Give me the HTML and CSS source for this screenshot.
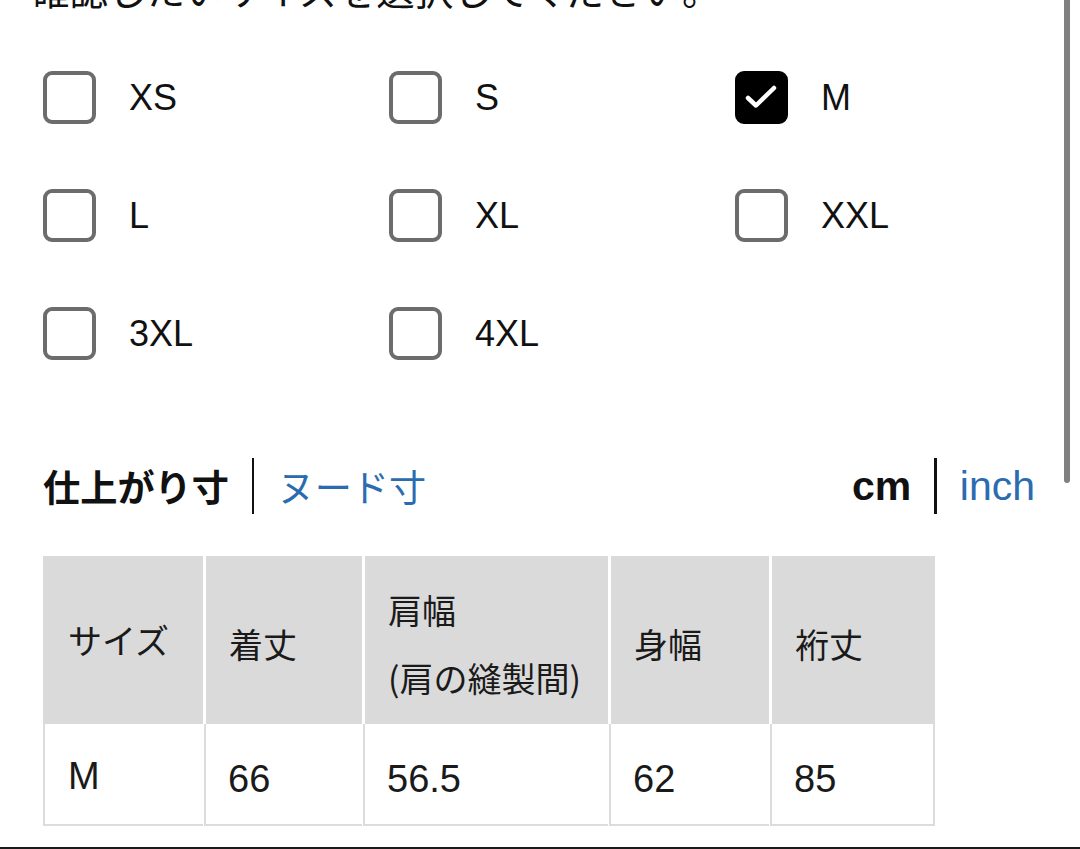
FILE: index.html
```html
<!DOCTYPE html>
<html lang="ja">
<head>
<meta charset="utf-8">
<link rel="stylesheet" href="styles.css">
</head>
<body>
<div class="page">
  <p class="title">確認したいサイズを選択してください。</p>

  <div class="options">
    <label class="opt"><span class="box"></span><span class="lbl">XS</span></label>
    <label class="opt"><span class="box"></span><span class="lbl">S</span></label>
    <label class="opt"><span class="box checked"><svg viewBox="0 0 53 53" width="53" height="53"><path d="M13 27 L21 34.5 L39 17" fill="none" stroke="#fff" stroke-width="4.5" stroke-linecap="round" stroke-linejoin="round"/></svg></span><span class="lbl">M</span></label>
    <label class="opt"><span class="box"></span><span class="lbl">L</span></label>
    <label class="opt"><span class="box"></span><span class="lbl">XL</span></label>
    <label class="opt"><span class="box"></span><span class="lbl">XXL</span></label>
    <label class="opt"><span class="box"></span><span class="lbl">3XL</span></label>
    <label class="opt"><span class="box"></span><span class="lbl">4XL</span></label>
  </div>

  <div class="tabs">
    <div class="tabgroup">
      <span class="tab active jp">仕上がり寸</span>
      <span class="sep"></span>
      <span class="tab link jp">ヌード寸</span>
    </div>
    <div class="tabgroup">
      <span class="tab active unit">cm</span>
      <span class="sep"></span>
      <span class="tab link unit">inch</span>
    </div>
  </div>

  <div class="table">
    <div class="th th-kana">サイズ</div>
    <div class="th">着丈</div>
    <div class="th">肩幅<br>(肩の縫製間)</div>
    <div class="th">身幅</div>
    <div class="th">裄丈</div>
    <div class="td">M</div>
    <div class="td">66</div>
    <div class="td">56.5</div>
    <div class="td">62</div>
    <div class="td">85</div>
  </div>
</div>
<div class="bottombar"></div>
<div class="scrollbar"></div>
</body>
</html>
```

FILE: styles.css
```css
html, body {
  margin: 0;
  padding: 0;
  background: #fff;
  overflow: hidden;
}
body {
  font-family: "Liberation Sans", "Noto Sans CJK JP", sans-serif;
  color: #111;
  height: 849px;
  position: relative;
}
.page {
  padding-left: 43px;
  padding-right: 45px;
}
.title {
  margin: -32px 0 0 -12px;
  font-family: "Noto Sans CJK JP", sans-serif;
  font-size: 38.5px;
  line-height: 40px;
  height: 40px;
  white-space: nowrap;
}
.options {
  margin-top: 63px;
  display: grid;
  grid-template-columns: 346px 346px 346px;
  row-gap: 65px;
}
.opt {
  display: flex;
  align-items: center;
  height: 53px;
}
.box {
  box-sizing: border-box;
  width: 53px;
  height: 53px;
  border: 4.5px solid #6c6c6c;
  border-radius: 9px;
  flex: none;
  display: block;
}
.box.checked {
  background: #000;
  border-color: #000;
  position: relative;
}
.box.checked svg {
  position: absolute;
  left: -4.5px;
  top: -4.5px;
}
.lbl {
  margin-left: 33px;
  font-size: 36px;
  line-height: 40px;
  color: #111;
}
.tabs {
  margin-top: 98px;
  display: flex;
  justify-content: space-between;
  align-items: center;
  height: 56px;
}
.tabgroup {
  display: flex;
  align-items: center;
  gap: 23px;
}
.sep {
  width: 2.5px;
  height: 56px;
  background: #111;
}
.tab.jp {
  font-family: "Noto Sans CJK JP", sans-serif;
  font-size: 37.2px;
  line-height: 40px;
}
.tab.unit {
  font-size: 41px;
  line-height: 40px;
}
.tab.active {
  font-weight: 700;
  color: #111;
}
.tab.link {
  color: #2b6cb0;
  font-weight: 400;
}
.table {
  margin-top: 42px;
  width: 892px;
  display: grid;
  grid-template-columns: 160px 159px 246px 161px 166px;
  grid-template-rows: 168px 102px;
  box-sizing: border-box;
}
.th {
  background: #dadada;
  font-family: "Noto Sans CJK JP", sans-serif;
  font-size: 34px;
  line-height: 68px;
  display: flex;
  flex-direction: column;
  justify-content: center;
  padding-left: 23px;
  padding-top: 8px;
  border-left: 3px solid #fff;
  color: #1a1a1a;
}
.th:first-child {
  border-left: 2px solid #dadada;
  padding-left: 23px;
}
.th.th-kana {
  padding-top: 0;
}
.td {
  font-size: 38px;
  line-height: 40px;
  display: flex;
  align-items: center;
  padding-left: 22px;
  padding-top: 10px;
  border-left: 2px solid #dcdcdc;
  border-bottom: 2px solid #dcdcdc;
  margin-left: 1px;
  color: #1a1a1a;
}
.td:nth-child(6) {
  margin-left: 0;
  padding-left: 23px;
  padding-top: 4px;
}
.td:nth-child(10) {
  border-right: 2px solid #dcdcdc;
}
.bottombar {
  position: absolute;
  left: 0;
  right: 0;
  top: 847px;
  height: 2px;
  background: #1a1a1a;
}
.scrollbar {
  position: fixed;
  right: 10px;
  top: -6px;
  width: 6px;
  height: 489px;
  border-radius: 3px;
  background: #808080;
}
```
